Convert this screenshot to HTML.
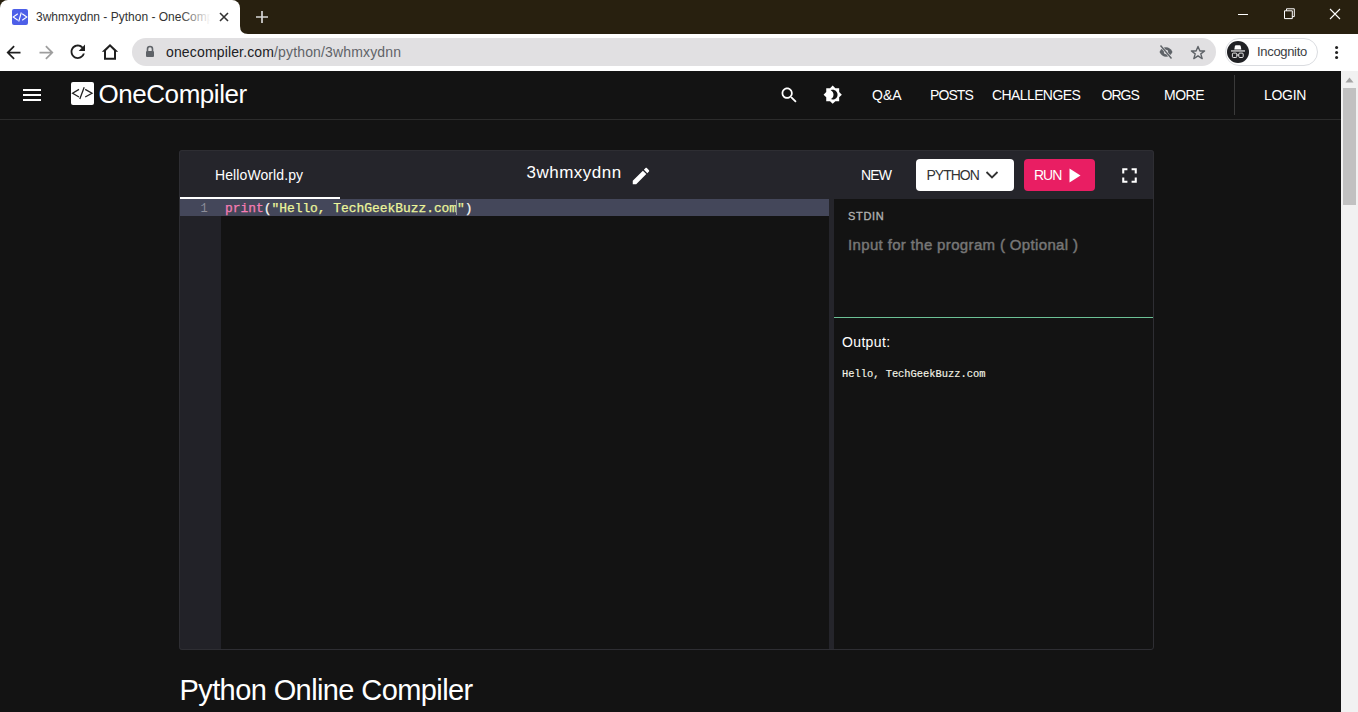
<!DOCTYPE html>
<html><head><meta charset="utf-8">
<style>
*{margin:0;padding:0;box-sizing:border-box}
html,body{width:1358px;height:712px;overflow:hidden;background:#131313;font-family:"Liberation Sans",sans-serif;position:relative}
div,span,svg{position:absolute}
.t{line-height:1;white-space:nowrap}
#tabbar{left:0;top:0;width:1358px;height:34px;background:#28200f}
#tab{left:0;top:0;width:240px;height:34px;background:#fff;border-radius:8px 8px 0 0}
#toolbar{left:0;top:34px;width:1358px;height:37px;background:#fff}
#omni{left:132px;top:38px;width:1084px;height:28px;background:#e1e0e2;border-radius:14px}
#nav{left:0;top:71px;width:1341px;height:49px;background:#131313;border-bottom:1px solid #2c2c2c}
.nv{color:#fff;font-size:14px;top:88px}
#sb{left:1341px;top:71px;width:17px;height:641px;background:#f1f1f1}
#sbthumb{left:1343px;top:88px;width:13px;height:117px;background:#c1c1c1}
#editor{left:179px;top:150px;width:975px;height:500px;background:#131313;border-radius:3px;overflow:hidden}
#eborder{left:179px;top:150px;width:975px;height:500px;border:1px solid #2e2e33;border-radius:3px}
</style></head><body>
<!-- browser chrome -->
<div id="tabbar"></div>
<div id="tab"></div>
<svg style="left:240px;top:26px" width="8" height="8"><path d="M0 0 Q0 8 8 8 L0 8Z" fill="#fff"/></svg>
<!-- favicon -->
<div style="left:12px;top:9px;width:16px;height:16px;background:#4d5fe8;border-radius:2px"></div>
<svg style="left:12px;top:9px" width="16" height="16"><path d="M5.8 4.8L1.2 8L5.8 11.2M10.2 4.8L14.8 8L10.2 11.2M9.3 3.5L6.7 12.5" stroke="#fff" stroke-width="1.1" fill="none"/></svg>
<div style="left:36px;top:10px;width:180px;height:16px;overflow:hidden">
  <div class="t" style="left:0;top:1px;font-size:12px;color:#333">3whmxydnn - Python - OneCompiler</div>
  <div style="left:144px;top:0;width:36px;height:16px;background:linear-gradient(to right,rgba(255,255,255,0),#fff 85%)"></div>
</div>
<svg style="left:219px;top:12px" width="10" height="10"><path d="M1 1L9 9M9 1L1 9" stroke="#333" stroke-width="1.6"/></svg>
<svg style="left:255px;top:10px" width="14" height="14"><path d="M7 1V13M1 7H13" stroke="#d6d6d6" stroke-width="1.7"/></svg>
<svg style="left:1237px;top:9px" width="12" height="12"><path d="M1 5.5H11" stroke="#fff" stroke-width="1"/></svg>
<svg style="left:1283px;top:8px" width="12" height="12"><path d="M3.5 2.8V0.8H11.3V8.6H9.3M1.5 2.8H9.3V10.6H1.5Z" stroke="#fff" stroke-width="1" fill="none"/></svg>
<svg style="left:1329px;top:8px" width="12" height="12"><path d="M1 1L11 11M11 1L1 11" stroke="#fff" stroke-width="1.1"/></svg>

<div id="toolbar"></div>
<svg style="left:3.4px;top:41.8px" width="21" height="21" viewBox="0 0 24 24"><path d="M20 11H7.83l5.59-5.59L12 4l-8 8 8 8 1.41-1.41L7.83 13H20v-2z" fill="#1f1f1f"/></svg>
<svg style="left:35.7px;top:41.8px" width="21" height="21" viewBox="0 0 24 24"><path d="M12 4l-1.41 1.41L16.17 11H4v2h12.17l-5.58 5.59L12 20l8-8z" fill="#9e9e9e"/></svg>
<svg style="left:67.2px;top:41.2px" width="21.6" height="21.6" viewBox="0 0 24 24"><path d="M17.65 6.35C16.2 4.9 14.21 4 12 4c-4.42 0-7.99 3.58-7.99 8s3.57 8 7.99 8c3.73 0 6.84-2.55 7.730-6h-2.08c-.82 2.33-3.04 4-5.65 4-3.31 0-6-2.69-6-6s2.69-6 6-6c1.66 0 3.14.69 4.22 1.78L13 11h7V4l-2.35 2.35z" fill="#1f1f1f"/></svg>
<svg style="left:100px;top:42px" width="20" height="20"><path fill-rule="evenodd" d="M10 2L18.2 9.8H16V17.7H4V9.8H1.8Z M10 4.8L14 8.8V15.7H6V8.8Z" fill="#1f1f1f"/></svg>
<div id="omni"></div>
<svg style="left:145px;top:45px" width="10" height="13"><path d="M2.5 6V4A2.5 2.5 0 0 1 7.5 4V6" stroke="#5f6368" stroke-width="1.6" fill="none"/><rect x="1" y="6" width="8" height="6" rx="1" fill="#5f6368"/></svg>
<div class="t" style="left:166px;top:44.5px;font-size:14px;color:#202124;letter-spacing:0.15px">onecompiler.com<span style="position:static;color:#5f6368">/python/3whmxydnn</span></div>
<svg style="left:1158px;top:44px" width="16" height="16"><path d="M1.5 8C3 4.8 5.3 3.3 8 3.3S13 4.8 14.5 8C13 11.2 10.7 12.7 8 12.7S3 11.2 1.5 8Z" fill="#5f6368"/><circle cx="8" cy="8" r="2.2" fill="#e1e0e2"/><path d="M2.5 1.5L13.5 14.5" stroke="#e1e0e2" stroke-width="2.6"/><path d="M2.5 1.5L13.5 14.5" stroke="#5f6368" stroke-width="1.4"/></svg>
<svg style="left:1190px;top:44.5px" width="16" height="16"><path d="M8 1.5L9.9 6H14.6L10.8 8.9L12.2 13.6L8 10.8L3.8 13.6L5.2 8.9L1.4 6H6.1Z" stroke="#5f6368" stroke-width="1.4" fill="none" stroke-linejoin="round"/></svg>
<div style="left:1224.5px;top:38px;width:93px;height:27.5px;border:1px solid #dadce0;border-radius:14px;background:#fff"></div>
<div style="left:1227px;top:41px;width:22px;height:22px;border-radius:50%;background:#202124"></div>
<svg style="left:1227px;top:41px" width="22" height="22"><path d="M7.3 8.4L7.9 5.1Q8.1 4.2 9 4.2H12.6Q13.5 4.2 13.7 5.1L14.3 8.4Z" fill="#fff"/><rect x="4" y="9.4" width="14" height="1.1" fill="#fff"/><rect x="5.4" y="12.1" width="4.4" height="4.4" rx="1" stroke="#fff" stroke-width="0.9" fill="none"/><rect x="11.8" y="12.1" width="4.4" height="4.4" rx="1" stroke="#fff" stroke-width="0.9" fill="none"/><path d="M9.8 14H11.8" stroke="#fff" stroke-width="0.9"/></svg>
<div class="t" style="left:1257px;top:44.9px;font-size:13px;color:#3c4043;letter-spacing:-0.32px">Incognito</div>
<svg style="left:1334px;top:43.7px" width="5" height="17"><circle cx="2.6" cy="3.5" r="1.55" fill="#222"/><circle cx="2.6" cy="8.5" r="1.55" fill="#222"/><circle cx="2.6" cy="13.5" r="1.55" fill="#222"/></svg>

<!-- page -->
<div id="nav"></div>
<svg style="left:22px;top:87px" width="20" height="15"><path d="M1 3H19M1 8H19M1 13H19" stroke="#fff" stroke-width="2"/></svg>
<div style="left:71px;top:82px;width:22.5px;height:22.5px;background:#fff;border-radius:2px"></div>
<svg style="left:71px;top:82px" width="23" height="23"><path d="M8 7.4L1.6 11.2L8 15M14.2 7.4L21 11.2L14.2 15M13.2 5.2L8.8 17" stroke="#222" stroke-width="1.3" fill="none"/></svg>
<div class="t" style="left:98.5px;top:81px;font-size:26px;color:#fff;letter-spacing:-0.45px">OneCompiler</div>
<svg style="left:779px;top:84.9px" width="20.6" height="20.6" viewBox="0 0 24 24"><path d="M15.5 14h-.79l-.28-.27C15.41 12.59 16 11.11 16 9.5 16 5.910 13.09 3 9.5 3S3 5.91 3 9.5 5.91 16 9.5 16c1.61 0 3.09-.59 4.23-1.57l.27.28v.79l5 4.99L20.49 19l-4.99-5zm-6 0C7.01 14 5 11.990 5 9.5S7.01 5 9.5 5 14 7.01 14 9.5 11.99 14 9.5 14z" fill="#fff"/></svg>
<svg style="left:823.3px;top:85.3px" width="19.4" height="19.4" viewBox="0 0 24 24"><path fill-rule="evenodd" d="M20 8.69V4h-4.69L12 .69 8.69 4H4v4.69L.69 12 4 15.31V20h4.69L12 23.31 15.31 20H20v-4.69L23.31 12 20 8.69zM12 18c-.89 0-1.74-.2-2.5-.55C11.56 16.5 13 14.42 13 12s-1.44-4.5-3.5-5.45C10.26 6.2 11.11 6 12 6c3.31 0 6 2.690 6 6s-2.69 6-6 6z" fill="#fff"/></svg>
<div class="t nv" style="left:872px">Q&amp;A</div>
<div class="t nv" style="left:930px;letter-spacing:-0.9px">POSTS</div>
<div class="t nv" style="left:992px;letter-spacing:-0.6px">CHALLENGES</div>
<div class="t nv" style="left:1101.5px;letter-spacing:-1px">ORGS</div>
<div class="t nv" style="left:1164px;letter-spacing:-0.5px">MORE</div>
<div style="left:1234px;top:75px;width:1px;height:40px;background:#3a3a3a"></div>
<div class="t nv" style="left:1264px;letter-spacing:-0.3px">LOGIN</div>

<div id="sb"></div>
<svg style="left:1345px;top:77px" width="9" height="6"><path d="M0.5 5.5L4.5 0.5L8.5 5.5Z" fill="#a3a3a3"/></svg>
<div id="sbthumb"></div>

<!-- editor -->
<div id="editor">
  <div style="left:0;top:0;width:975px;height:49px;background:#25252b"></div>
  <div class="t" style="left:36px;top:17.5px;font-size:14px;color:#fff;letter-spacing:0.1px">HelloWorld.py</div>
  <div style="left:0;top:47px;width:161px;height:2px;background:#fff"></div>
  <div class="t" style="left:347.5px;top:14.2px;font-size:17px;color:#fff;letter-spacing:0.5px">3whmxydnn</div>
  <svg style="left:450.85px;top:15.3px" width="22" height="22" viewBox="0 0 24 24"><path d="M3 17.25V21h3.75L17.81 9.94l-3.75-3.75L3 17.25zM20.71 7.04c.39-.39.39-1.02 0-1.41l-2.34-2.34c-.39-.39-1.02-.39-1.41 0l-1.83 1.83 3.75 3.75 1.83-1.83z" fill="#fff"/></svg>
  <div class="t" style="left:682px;top:18px;font-size:14px;color:#fff;letter-spacing:-0.8px">NEW</div>
  <div style="left:737px;top:9px;width:98px;height:32px;background:#fff;border-radius:4px"></div>
  <div class="t" style="left:747.5px;top:18px;font-size:14px;color:#333;letter-spacing:-1px">PYTHON</div>
  <svg style="left:806px;top:20px" width="14" height="10"><path d="M1.5 2L7 7.5L12.5 2" stroke="#333" stroke-width="1.8" fill="none"/></svg>
  <div style="left:845px;top:9px;width:71px;height:32px;background:#e91e63;border-radius:4px"></div>
  <div class="t" style="left:855px;top:18px;font-size:14px;color:#fff;letter-spacing:-1px">RUN</div>
  <svg style="left:890px;top:18px" width="12" height="15"><path d="M0.5 0.5L11.5 7.5L0.5 14.5Z" fill="#fff"/></svg>
  <svg style="left:937.8px;top:12.8px" width="25" height="25" viewBox="0 0 24 24"><path d="M7 14H5v5h5v-2H7v-3zm-2-4h2V7h3V5H5v5zm12 7h-3v2h5v-5h-2v3zM14 5v2h3v3h2V5h-5z" fill="#fff"/></svg>

  <!-- body -->
  <div style="left:0;top:49px;width:42px;height:451px;background:#222228"></div>
  <div style="left:0;top:49px;width:650px;height:17px;background:#44475a"></div>
  <div class="t" style="left:21.5px;top:52.5px;font-size:12px;color:#8c8d99;font-family:'Liberation Mono',monospace">1</div>
  <div class="t" style="left:46px;top:53px;font-size:12.9px;color:#f8f8f2;font-family:'Liberation Mono',monospace;-webkit-text-stroke-width:0.25px"><span style="position:static;color:#f57db4">print</span>(<span style="position:static;color:#ecf59a">"Hello, TechGeekBuzz.com"</span>)</div>
  <div style="left:277px;top:50px;width:1px;height:15px;background:#9a9aa0"></div>
  <div style="left:650px;top:49px;width:5px;height:451px;background:#25252b"></div>

  <div class="t" style="left:669px;top:60.5px;font-size:11px;color:#b0b0b0;-webkit-text-stroke:0.35px #b0b0b0;letter-spacing:0.7px">STDIN</div>
  <div class="t" style="left:669px;top:87px;font-size:15px;color:#777;-webkit-text-stroke:0.45px #777;letter-spacing:0.35px">Input for the program ( Optional )</div>
  <div style="left:655px;top:166.5px;width:320px;height:1.5px;background:#6cc196"></div>
  <div class="t" style="left:663px;top:184.5px;font-size:14px;color:#fff;letter-spacing:0.35px">Output:</div>
  <div class="t" style="left:663px;top:219px;font-size:10.4px;color:#f4f4e8;font-family:'Liberation Mono',monospace;-webkit-text-stroke:0.15px #f4f4e8">Hello, TechGeekBuzz.com</div>
</div>

<div id="eborder"></div>
<div class="t" style="left:179.5px;top:675.5px;font-size:29px;color:#fff;letter-spacing:-0.6px">Python Online Compiler</div>
</body></html>
